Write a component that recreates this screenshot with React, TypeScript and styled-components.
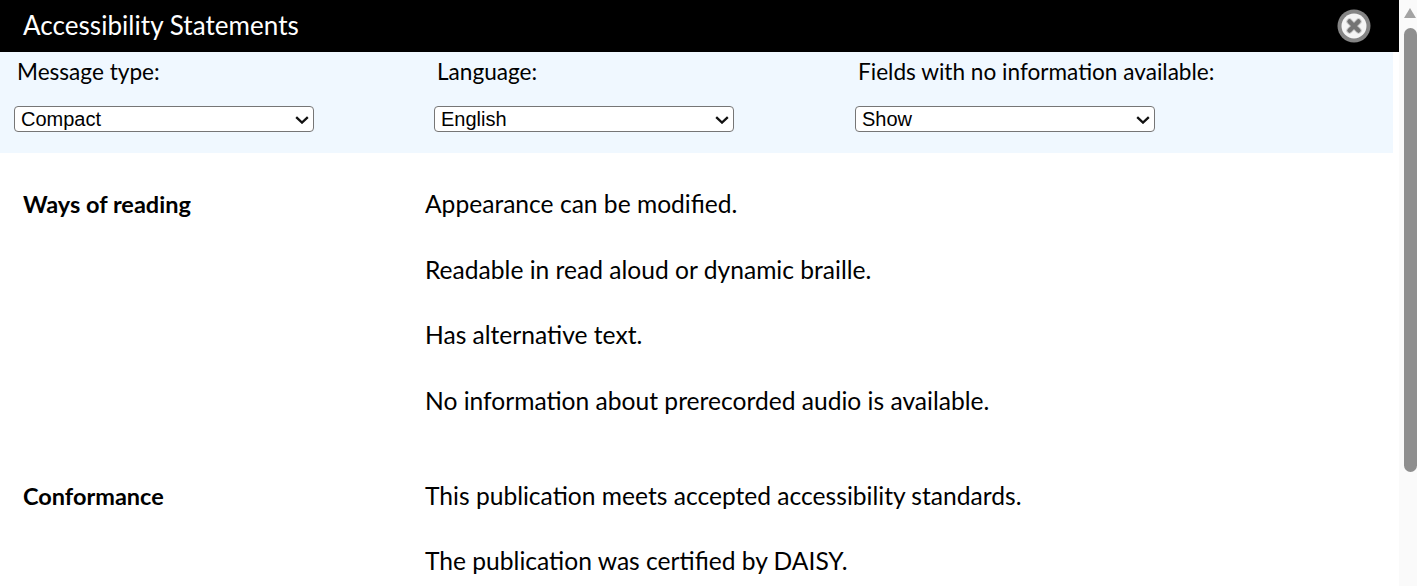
import React from "react";
import styled, { createGlobalStyle } from "styled-components";

const Global = createGlobalStyle`
  html, body { margin: 0; padding: 0; height: 586px; overflow: hidden; background: #fff; }
  body { font-family: Lato, "Open Sans", sans-serif; color: #000; }
`;

const chevron = encodeURIComponent(
  '<svg xmlns="http://www.w3.org/2000/svg" width="14" height="8" viewBox="0 0 14 8"><path d="M1.2 1.2 L7 6.6 L12.8 1.2" fill="none" stroke="#111" stroke-width="2.3"/></svg>'
);

const Page = styled.div`
  display: flex;
  width: 1417px;
  height: 586px;
  overflow: hidden;
`;
const Main = styled.main`
  width: 1399px;
  flex: none;
  overflow: hidden;
`;
const Header = styled.header`
  display: flex;
  align-items: center;
  justify-content: space-between;
  height: 52px;
  background: #000;
  padding: 0 28px 0 23px;
  box-sizing: border-box;
`;
const Title = styled.h1`
  margin: -2px 0 0;
  font-size: 26px;
  font-weight: 400;
  letter-spacing: 0.05px;
  color: #fff;
  line-height: 52px;
`;
const CloseButton = styled.button`
  width: 34px;
  height: 34px;
  padding: 0;
  border: 0;
  background: none;
  display: block;
  margin-top: -1px;
`;
const Filters = styled.section`
  width: 1393px;
  height: 101px;
  background: #f0f8ff;
  display: grid;
  grid-template-columns: 420px 421px 1fr;
  padding-left: 14px;
  box-sizing: border-box;
`;
const Filter = styled.label`
  display: flex;
  flex-direction: column;
  align-items: flex-start;
`;
const FilterLabel = styled.span`
  font-size: 22.6px;
  line-height: 26px;
  margin: 7px 0 21px 3px;
`;
const Select = styled.select`
  appearance: none;
  width: 300px;
  height: 26px;
  padding: 0 24px 0 6px;
  font-family: "Liberation Sans", Arial, sans-serif;
  font-size: 20px;
  color: #000;
  background: #fff url("data:image/svg+xml,${chevron}") no-repeat right 4px top 9px;
  border: 1px solid #767676;
  border-radius: 4px;
`;
const Statements = styled.div`
  padding: 37px 0 0 23px;
`;
const Group = styled.section`
  display: grid;
  grid-template-columns: 402px 1fr;
  margin-bottom: 67px;
`;
const GroupTitle = styled.h2`
  margin: 0;
  font-size: 23.5px;
  line-height: 28px;
  font-weight: 700;
`;
const Lines = styled.div`
  display: flex;
  flex-direction: column;
  gap: 37.5px;
`;
const Line = styled.p`
  margin: 0;
  font-size: 24.6px;
  line-height: 28px;
`;
const Scrollbar = styled.aside`
  width: 18px;
  flex: none;
  height: 586px;
  background: #fafafa;
  display: flex;
  flex-direction: column;
  align-items: flex-end;
`;
const ArrowUp = styled.div`
  width: 0;
  height: 0;
  margin: 8px 1px 0 0;
  border-left: 6.5px solid transparent;
  border-right: 6.5px solid transparent;
  border-bottom: 10px solid #a3a3a3;
`;
const Thumb = styled.div`
  width: 13px;
  height: 444px;
  margin-top: 10px;
  background: #8f8f8f;
  border-radius: 7px;
`;

const CloseIcon = () => (
  <svg width="34" height="34" viewBox="0 0 34 34">
    <circle cx="17" cy="17" r="16.5" fill="#858585" />
    <circle cx="17" cy="17" r="12.5" fill="#f5f5f5" />
    <path d="M12.5 12.5 L21.5 21.5 M21.5 12.5 L12.5 21.5" stroke="#d0d0d0" strokeWidth="6.5" strokeLinecap="round" />
    <path d="M12.5 12.5 L21.5 21.5 M21.5 12.5 L12.5 21.5" stroke="#747474" strokeWidth="4.5" strokeLinecap="round" />
  </svg>
);

const filters = [
  { label: "Message type:", options: ["Compact", "Descriptive"] },
  { label: "Language:", options: ["English", "French"] },
  { label: "Fields with no information available:", options: ["Show", "Hide"] },
];
const groups = [
  {
    title: "Ways of reading",
    lines: [
      "Appearance can be modified.",
      "Readable in read aloud or dynamic braille.",
      "Has alternative text.",
      "No information about prerecorded audio is available.",
    ],
  },
  {
    title: "Conformance",
    lines: [
      "This publication meets accepted accessibility standards.",
      "The publication was certified by DAISY.",
    ],
  },
];

export default function App() {
  return (
    <Page>
      <Global />
      <Main>
        <Header>
          <Title>Accessibility Statements</Title>
          <CloseButton aria-label="Close"><CloseIcon /></CloseButton>
        </Header>
        <Filters>
          {filters.map((f) => (
            <Filter key={f.label}>
              <FilterLabel>{f.label}</FilterLabel>
              <Select defaultValue={f.options[0]}>
                {f.options.map((o) => <option key={o}>{o}</option>)}
              </Select>
            </Filter>
          ))}
        </Filters>
        <Statements>
          {groups.map((g) => (
            <Group key={g.title}>
              <GroupTitle>{g.title}</GroupTitle>
              <Lines>
                {g.lines.map((l) => <Line key={l}>{l}</Line>)}
              </Lines>
            </Group>
          ))}
        </Statements>
      </Main>
      <Scrollbar>
        <ArrowUp />
        <Thumb />
      </Scrollbar>
    </Page>
  );
}
